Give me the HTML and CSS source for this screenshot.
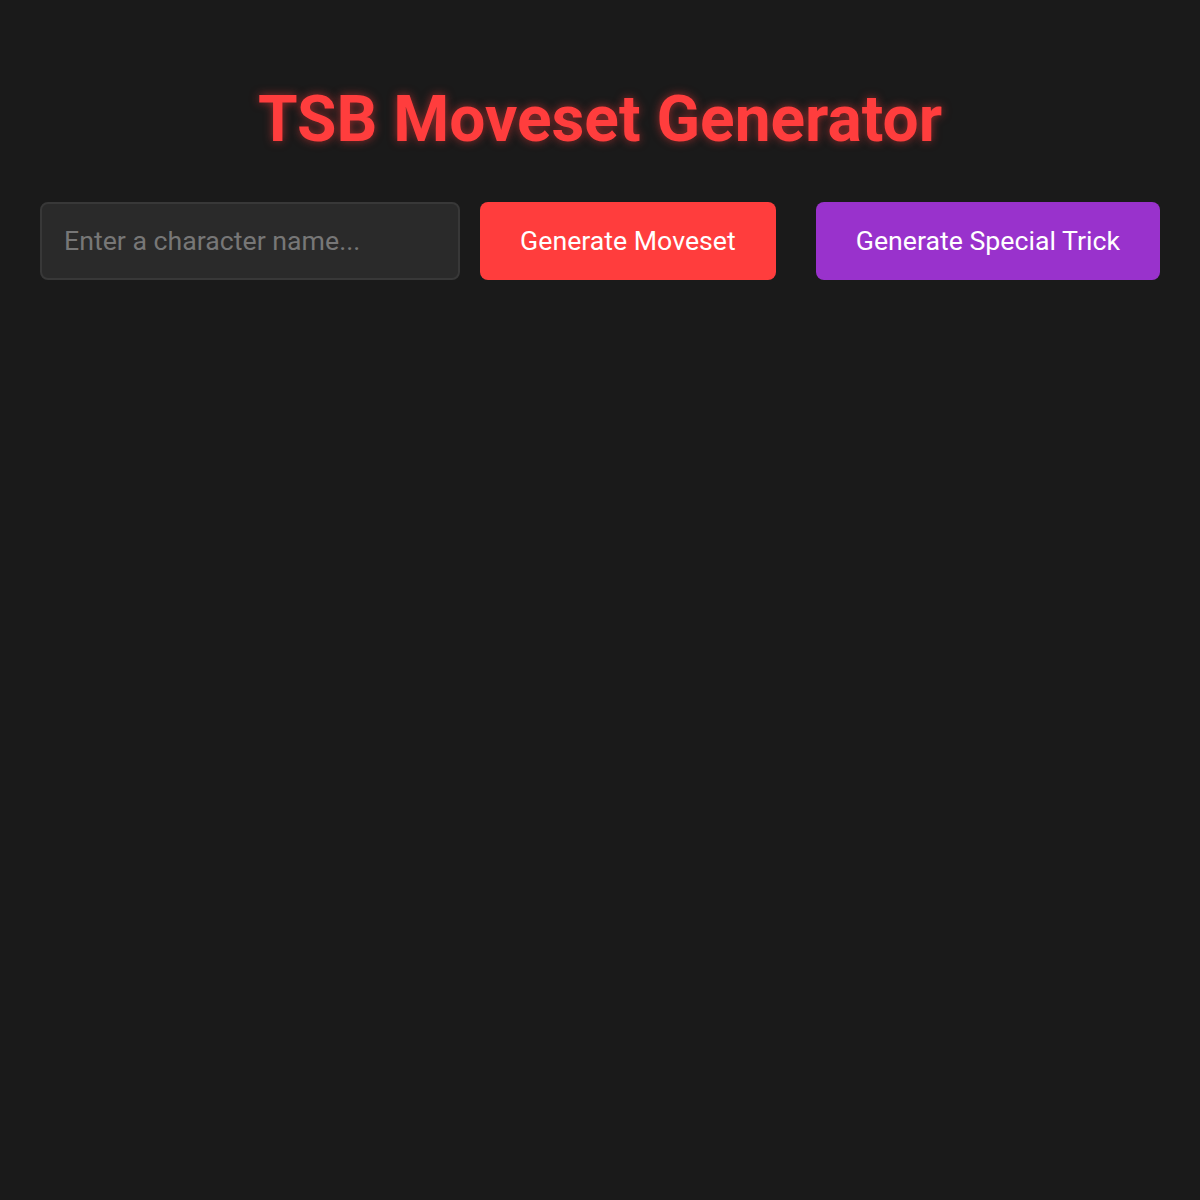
FILE: index.html
```html
<!DOCTYPE html>
<html lang="en">
<head>
<meta charset="utf-8">
<title>TSB Moveset Generator</title>
<link rel="stylesheet" href="styles.css">
</head>
<body>
<div class="container">
  <h1 class="title">TSB Moveset Generator</h1>
  <div class="controls">
    <input class="name-input" type="text" placeholder="Enter a character name...">
    <button class="btn btn-moveset">Generate Moveset</button>
    <button class="btn btn-special">Generate Special Trick</button>
  </div>
</div>
</body>
</html>
```

FILE: styles.css
```css
html, body {
  margin: 0;
  padding: 0;
  background: #1a1a1a;
  color: #fff;
  font-family: Roboto, "Liberation Sans", sans-serif;
}
.container {
  padding: 40px;
}
.title {
  margin: 42px 0 45px;
  text-align: center;
  font-size: 64px;
  font-weight: 700;
  line-height: 75px;
  color: #ff3d3d;
  text-shadow: 0 0 10px rgba(255, 61, 61, 0.55);
}
.controls {
  display: flex;
  gap: 20px;
  align-items: stretch;
}
.name-input {
  flex: 1;
  min-width: 0;
  box-sizing: border-box;
  padding: 0 22px;
  border: 2px solid #383838;
  border-radius: 8px;
  background: #2a2a2a;
  color: #fff;
  font-family: Roboto, "Liberation Sans", sans-serif;
  font-size: 26.7px;
  outline: none;
}
.name-input::placeholder {
  color: #777;
}
.btn {
  flex: none;
  border: none;
  border-radius: 8px;
  padding: 24px 40px;
  color: #fff;
  font-family: Roboto, "Liberation Sans", sans-serif;
  font-size: 26.7px;
  line-height: 30px;
  cursor: pointer;
}
.btn-moveset {
  background: #ff3d3d;
}
.btn-special {
  background: #9932cc;
  margin-left: 20px;
}
```
